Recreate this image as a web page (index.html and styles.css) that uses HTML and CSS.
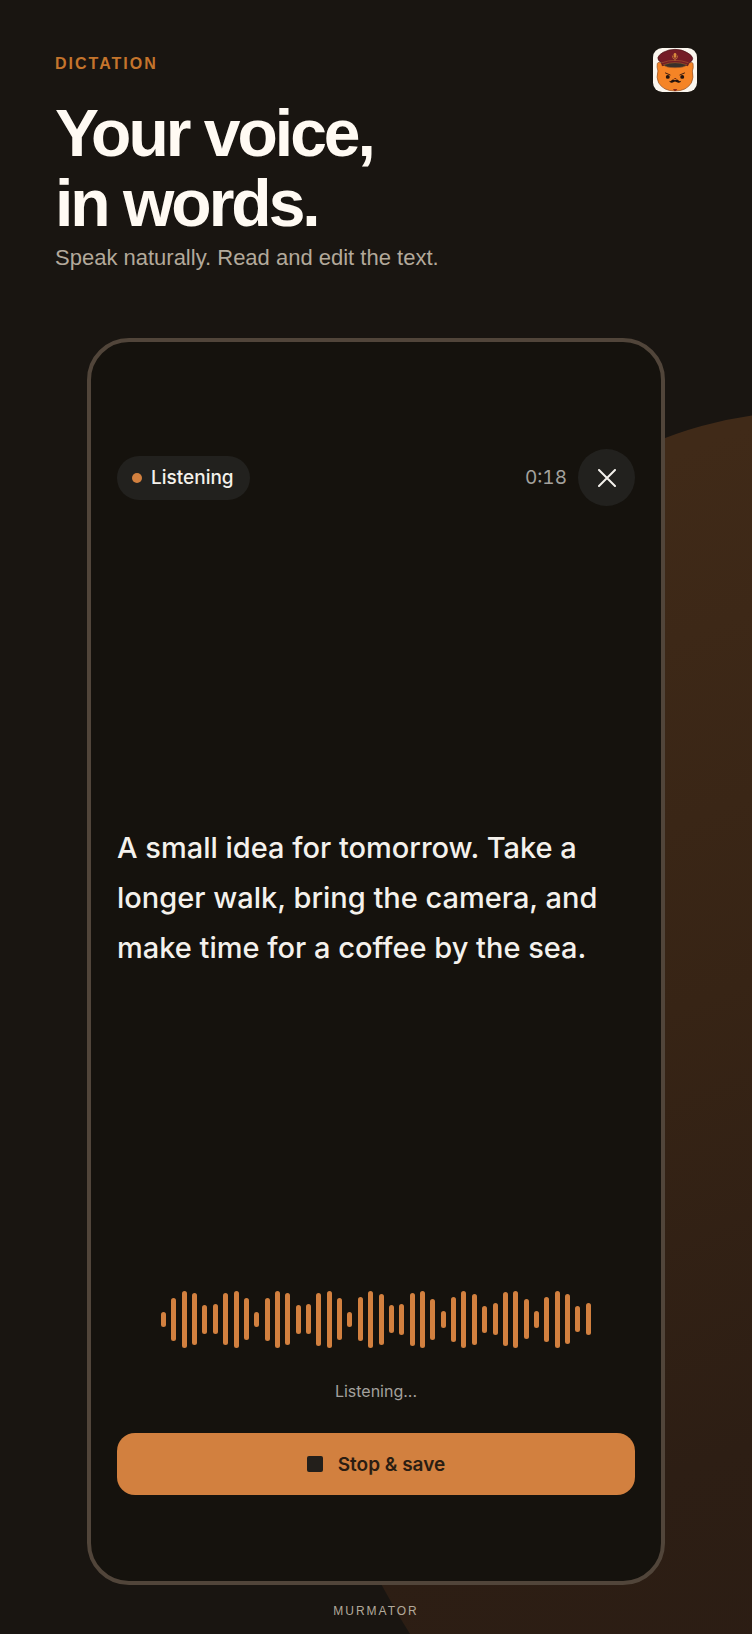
FILE: index.html
```
<!DOCTYPE html>
<html lang="en">
<head>
    <meta charset="UTF-8">
    <meta name="viewport" content="width=device-width, initial-scale=1.0">
    <title>Murmator - Dictation</title>
    <link rel="stylesheet" href="styles.css">
</head>
<body>
    <div class="page">
        <div class="glow"></div>
        <header class="intro">
            <div>
                <p class="eyebrow">DICTATION</p>
                <h1>Your voice,<br>in words.</h1>
                <p class="subtitle">Speak naturally. Read and edit the text.</p>
            </div>
            <svg class="logo" viewBox="28 28 134 134" role="img" aria-label="Murmator">
                <rect x="28" y="28" width="134" height="134" rx="28" fill="#fbf6ef"/>
                <path d="M41 76 Q43 68 57 76 Q95 66 133 76 Q148 68 150 76 Q152 88 148 98 Q153 118 145 134 Q130 159 95 159 Q60 159 45 134 Q37 118 43 98 Q39 86 41 76Z" fill="#f58426" stroke="#8a4518" stroke-width="2"/>
                <path d="M43 57 Q45 49 59 41 Q76 32 95 32 Q116 32 132 42 Q147 50 149 59 Q150 67 137 74 L134 82 Q95 72 56 82 L54 73 Q41 66 43 57Z" fill="#741c26" stroke="#4a1216" stroke-width="2"/>
                <path d="M55 73 Q95 58 136 73" fill="none" stroke="#a8582a" stroke-width="2"/>
                <path d="M60 79 Q95 66 131 79 Q125 88 95 88 Q66 88 60 79Z" fill="#38302b" stroke="#a65a25" stroke-width="2"/>
                <rect x="91" y="43" width="8" height="15" rx="4" fill="#d88a3c"/>
                <path d="M87 51 Q87 62 95 62 Q103 62 103 51 M95 62 V67" fill="none" stroke="#d88a3c" stroke-width="2"/>
                <path d="M66 104 L80 110 M110 110 L124 104" stroke="#3b1d12" stroke-width="3" stroke-linecap="round"/>
                <circle cx="73" cy="116" r="6" fill="#22140f"/>
                <circle cx="117" cy="116" r="6" fill="#22140f"/>
                <path d="M91 119 H100 L96 123Z" fill="#6b2915"/>
                <path d="M95 126 Q88 121 84 127 Q81 131 77 128 Q80 136 88 133 L95 130 L103 133 Q111 136 114 128 Q109 131 106 127 Q102 121 95 126Z" fill="#24130e"/>
                <path d="M89 153 H102 L98 159 H93Z" fill="#8a2a1d"/>
            </svg>
        </header>

        <main class="phone">
            <div class="topbar">
                <span class="pill"><span class="dot"></span>Listening</span>
                <div class="topbar-right">
                    <span class="timer">0:18</span>
                    <button type="button" class="close" aria-label="Close">
                        <svg viewBox="0 0 18 18"><path d="M1 1 L17 17 M17 1 L1 17"/></svg>
                    </button>
                </div>
            </div>
            <p class="transcript">A small idea for tomorrow. Take a longer walk, bring the camera, and make time for a coffee by the sea.</p>
            <div class="wave" id="wave"></div>
            <p class="status">Listening...</p>
            <button type="button" class="stop"><span class="stop-icon"></span>Stop &amp; save</button>
        </main>

        <footer>MURMATOR</footer>
    </div>

    <script>
        // Level of each bar in the waveform, in px
        const levels = [
            15, 43, 57, 52, 29, 30, 52, 57, 42,
            15, 43, 57, 52, 29, 30, 53, 57, 42,
            15, 44, 57, 51, 28, 31, 53, 57, 41,
            17, 45, 57, 51, 27, 32, 54, 57, 40,
            17, 45, 57, 50, 26, 32
        ];
        const wave = document.getElementById("wave");

        levels.forEach(level => {
            const bar = document.createElement("span");
            bar.style.height = `${level}px`;
            wave.appendChild(bar);
        });
    </script>
</body>
</html>
```
FILE: styles.css
```
* {
    box-sizing: border-box;
}
body {
    margin: 0;
    background-color: #191511;
    color: #f4f1ec;
    font-family: Inter, sans-serif;
}
h1, p {
    margin: 0;
}
button {
    border: none;
    padding: 0;
    font-family: inherit;
    cursor: pointer;
}
.page {
    position: relative;
    overflow: hidden;
    min-height: 100vh;
    padding: 48px 55px 12px;
}
/* Big warm oval behind the phone */
.glow {
    position: absolute;
    top: 25%;
    left: 37%;
    width: 140%;
    height: 90%;
    margin-top: 3px;
    border-radius: 50%;
    background: linear-gradient(160deg, #402a18 10%, #372415 40%, #2d1e14 65%, #281b13);
}

/* Header */
.intro {
    display: flex;
    justify-content: space-between;
    align-items: flex-start;
    font-family: "Liberation Sans", Arial, sans-serif;
}
.eyebrow {
    color: #c4742c;
    font-size: 16px;
    font-weight: bold;
    line-height: 32px;
    letter-spacing: 2px;
}
h1 {
    margin-top: 18px;
    color: #fffaf3;
    font-size: 66px;
    line-height: 70px;
    letter-spacing: -3px;
}
.subtitle {
    margin-top: 6px;
    color: #b3a99b;
    font-size: 22px;
    line-height: 28px;
}
.logo {
    flex: none;
    width: 44px;
    height: 44px;
}

/* Phone */
.phone {
    position: relative;
    display: flex;
    flex-direction: column;
    aspect-ratio: 578 / 1247;
    margin: 66px 32px 0;
    padding: 107px 26px 86px;
    border: 4px solid #51453a;
    border-radius: 42px;
    background-color: #15120d;
}
.topbar, .topbar-right {
    display: flex;
    align-items: center;
}
.topbar {
    justify-content: space-between;
}
.topbar-right {
    gap: 11px;
}
.pill {
    display: flex;
    align-items: center;
    gap: 9px;
    padding: 0 16px 0 15px;
    border-radius: 22px;
    background-color: #22211e;
    font-size: 19px;
    font-weight: 500;
    line-height: 44px;
}
.dot {
    width: 10px;
    height: 10px;
    border-radius: 50%;
    background-color: #d2803f;
}
.timer {
    color: #a3a19d;
    font-size: 19px;
    font-variant-numeric: tabular-nums;
}
.close {
    display: flex;
    align-items: center;
    justify-content: center;
    width: 57px;
    height: 57px;
    border-radius: 50%;
    background-color: #22211e;
}
.close svg {
    width: 18px;
    height: 18px;
    fill: none;
    stroke: #f4f1ec;
    stroke-width: 2;
    stroke-linecap: round;
}
.transcript {
    margin: auto 0;
    font-size: 29px;
    font-weight: 500;
    line-height: 50px;
}
.wave {
    display: flex;
    justify-content: space-between;
    align-items: center;
    height: 58px;
    padding: 0 44px;
}
.wave span {
    width: 5px;
    border-radius: 3px;
    background-color: #d2803f;
}
.status {
    margin: 31px 0 30px;
    color: #a3a19d;
    font-size: 16px;
    line-height: 24px;
    text-align: center;
}
.stop {
    display: flex;
    align-items: center;
    justify-content: center;
    gap: 15px;
    height: 62px;
    border-radius: 18px;
    background-color: #d2803f;
    color: #2a1d12;
    font-size: 19px;
    font-weight: 600;
}
.stop-icon {
    width: 16px;
    height: 16px;
    border-radius: 2px;
    background-color: #231f1b;
}

footer {
    position: relative;
    margin-top: 17px;
    color: #b3a99b;
    font-family: "Liberation Sans", Arial, sans-serif;
    font-size: 12px;
    line-height: 18px;
    letter-spacing: 2px;
    text-align: center;
}
```
